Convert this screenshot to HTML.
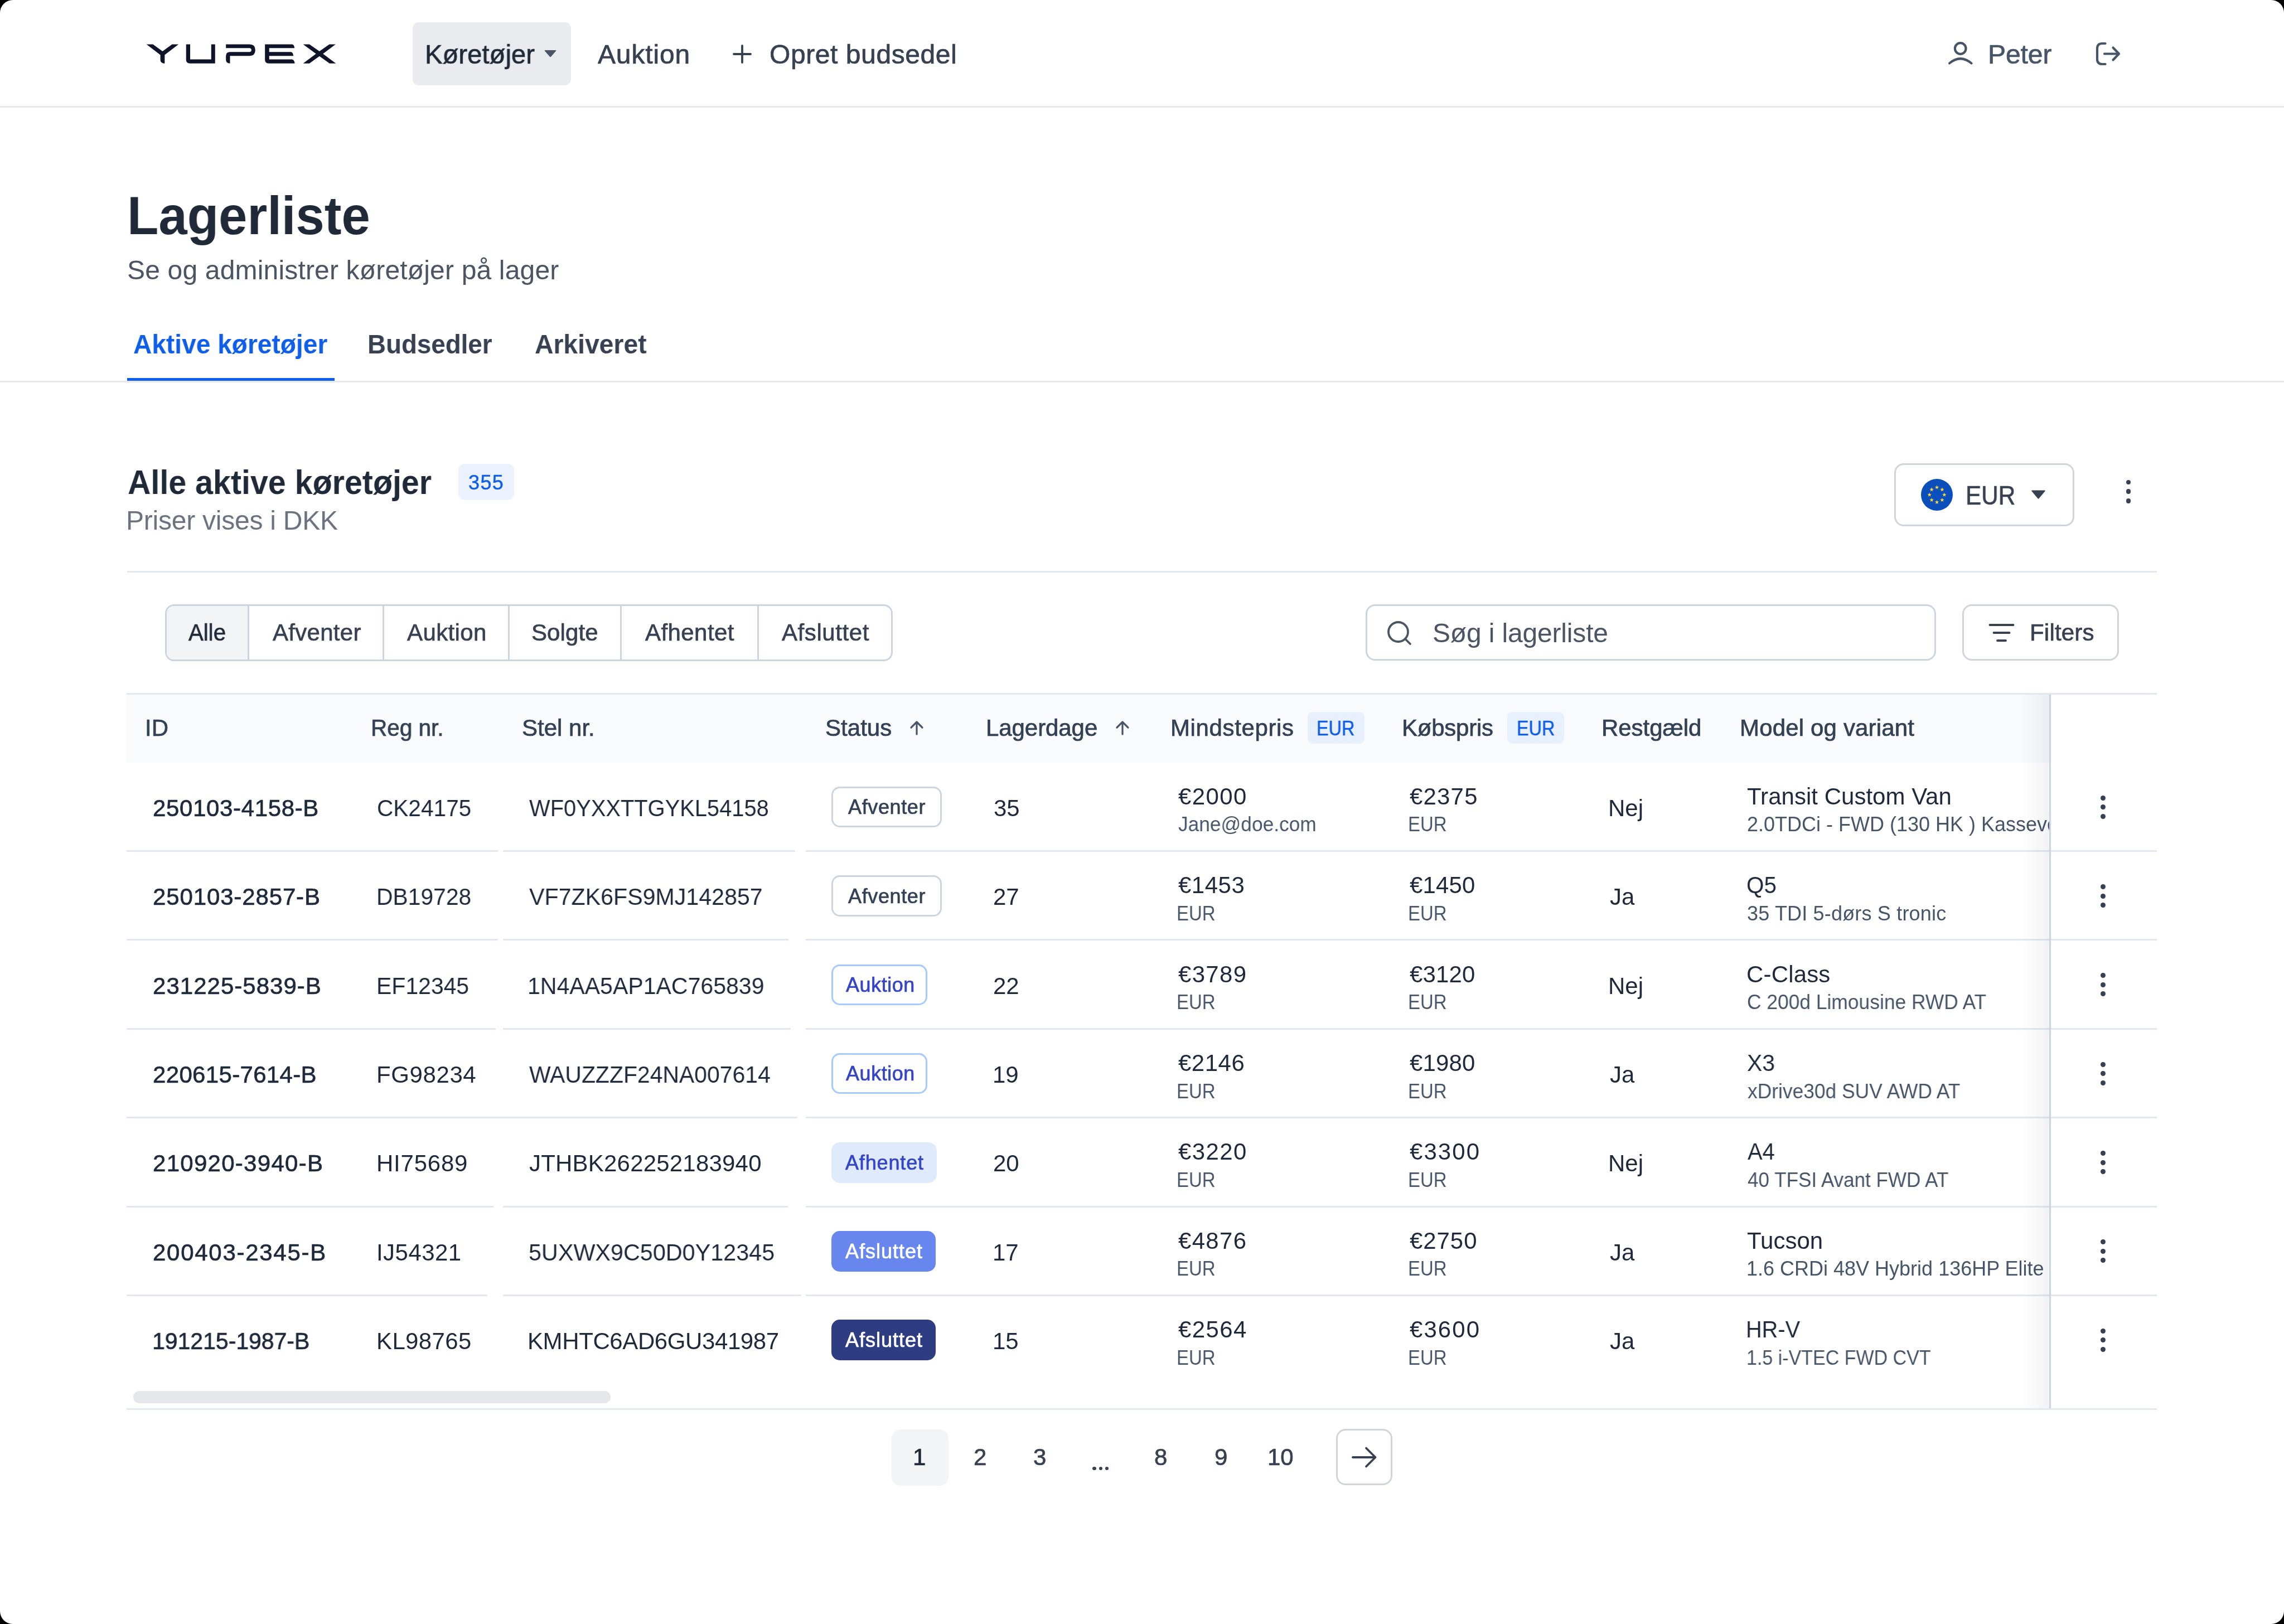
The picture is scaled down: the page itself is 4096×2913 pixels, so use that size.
<!DOCTYPE html>
<html><head><meta charset="utf-8"><style>
html,body{margin:0;padding:0;background:#000;width:4096px;height:2913px;overflow:hidden;}
#pg{position:absolute;left:0;top:0;width:4096px;height:2913px;background:#fff;border-radius:23px;overflow:hidden;font-family:'Liberation Sans', sans-serif;}
.t{position:absolute;white-space:nowrap;line-height:0;will-change:transform;}
.r{position:absolute;}
.s{position:absolute;overflow:visible;}
</style></head><body><div id="pg">
<svg class="s" style="left:250px;top:60px;width:370px;height:70px;" viewBox="0 0 2284 432"><g fill="#10142a"><path d="M78,120 H150 L256,197 L362,120 H433 L280,238 V332 H270 Q232,326 232,292 V238 Z"/><path d="M517,120 H562 V287 H795 V120 H838 V332 H560 Q517,332 517,292 Z"/><path d="M958,120 H1220 Q1283,120 1283,184 Q1283,248 1220,248 H1003 V332 Q958,330 958,292 V250 Q958,205 1003,205 H1218 Q1240,205 1240,184 Q1240,162 1218,162 H958 Z"/><path d="M1390,120 H1690 Q1713,122 1718,162 H1437 V205 H1678 Q1700,207 1705,248 H1437 V287 H1690 Q1714,290 1720,332 H1432 Q1390,332 1390,292 Z"/><path d="M1812,120 H1882 L1993,198 L2103,120 H2172 L2032,225 L2175,332 H2105 L1993,252 L1882,332 H1812 L1955,225 Z"/></g></svg>
<div class="r" style="left:740.0px;top:40.0px;width:284.0px;height:113.0px;background:#e9ebee;border-radius:11px;"></div>
<div class="t" style="left:762.05px;top:98px;font-size:48px;color:#1f2937;-webkit-text-stroke:0.7px #1f2937;transform:scaleX(0.9848);transform-origin:0 0;">Køretøjer</div>
<svg class="s" style="left:976px;top:89px;width:22px;height:14px;" viewBox="0 0 22 14"><path d="M1.5,1 H20.5 Q22,1 21,2.5 L12.2,12.6 Q11,14 9.8,12.6 L1,2.5 Q0,1 1.5,1 Z" fill="#4b5563"/></svg>
<div class="t" style="left:1072.00px;top:98px;font-size:48px;color:#374151;-webkit-text-stroke:0.7px #374151;letter-spacing:0.833px;">Auktion</div>
<svg class="s" style="left:1310px;top:76px;width:42px;height:42px;" viewBox="0 0 42 42"><path d="M21,6 V36 M6,21 H36" stroke="#374151" stroke-width="3.8" stroke-linecap="round" fill="none"/></svg>
<div class="t" style="left:1380.00px;top:98px;font-size:48px;color:#374151;-webkit-text-stroke:0.7px #374151;letter-spacing:0.577px;">Opret budsedel</div>
<svg class="s" style="left:3490px;top:72px;width:52px;height:48px;" viewBox="0 0 52 48"><g stroke="#475569" stroke-width="4.2" fill="none" stroke-linecap="round"><circle cx="25.7" cy="15" r="9.8"/><path d="M6,41.5 Q25.7,25 45.5,41.5"/></g></svg>
<div class="t" style="left:3565.00px;top:98px;font-size:48px;color:#475569;-webkit-text-stroke:0.7px #475569;letter-spacing:-0.075px;">Peter</div>
<svg class="s" style="left:3752px;top:70px;width:56px;height:52px;" viewBox="0 0 56 52"><g stroke="#475569" stroke-width="4.2" fill="none" stroke-linecap="round" stroke-linejoin="round"><path d="M23.5,8 H18 Q9,8 9,17 V36 Q9,45 18,45 H23.5"/><path d="M22,26.5 H47 M37.5,15.5 L48,26.5 L37.5,37.5"/></g></svg>
<div class="r" style="left:0.0px;top:190.0px;width:4096.0px;height:3.0px;background:#e5e7eb;"></div>
<div class="t" style="left:227.79px;top:387px;font-size:97px;color:#1f2937;font-weight:700;transform:scaleX(0.9510);transform-origin:0 0;">Lagerliste</div>
<div class="t" style="left:228.00px;top:485px;font-size:48px;color:#4b5563;letter-spacing:0.171px;">Se og administrer køretøjer på lager</div>
<div class="t" style="left:239.04px;top:618px;font-size:48px;color:#0f5ee9;font-weight:700;transform:scaleX(0.9599);transform-origin:0 0;">Aktive køretøjer</div>
<div class="t" style="left:659.14px;top:618px;font-size:48px;color:#374151;font-weight:700;transform:scaleX(0.9524);transform-origin:0 0;">Budsedler</div>
<div class="t" style="left:958.64px;top:618px;font-size:48px;color:#374151;font-weight:700;transform:scaleX(0.9633);transform-origin:0 0;">Arkiveret</div>
<div class="r" style="left:0.0px;top:683.0px;width:4096.0px;height:3.0px;background:#e5e7eb;"></div>
<div class="r" style="left:228.0px;top:678.0px;width:372.0px;height:5.0px;background:#0f5ee9;"></div>
<div class="t" style="left:228.66px;top:865px;font-size:61px;color:#1f2937;font-weight:700;transform:scaleX(0.9401);transform-origin:0 0;">Alle aktive køretøjer</div>
<div class="r" style="left:822.0px;top:832.0px;width:99.5px;height:65.0px;background:#ebf2fe;border-radius:12px;"></div>
<div class="t" style="left:840.00px;top:866px;font-size:36px;color:#0f5ee9;-webkit-text-stroke:0.5px #0f5ee9;letter-spacing:1.400px;">355</div>
<div class="t" style="left:226.00px;top:934px;font-size:48px;color:#6b7280;letter-spacing:-0.235px;">Priser vises i DKK</div>
<div class="r" style="left:3397.0px;top:831.0px;width:323.0px;height:113.0px;background:#fff;border:3px solid #d1d5db;box-sizing:border-box;border-radius:17px;"></div>
<svg class="s" style="left:3444.5px;top:859px;width:57px;height:57px;" viewBox="0 0 57 57"><circle cx="28.5" cy="28.5" r="28.5" fill="#0b4fbd"/><polygon points="41.80,24.60 42.74,27.21 45.51,27.29 43.32,28.99 44.09,31.66 41.80,30.10 39.51,31.66 40.28,28.99 38.09,27.29 40.86,27.21" fill="#ffd935"/><polygon points="37.90,34.00 38.84,36.61 41.61,36.70 39.43,38.40 40.20,41.06 37.90,39.50 35.61,41.06 36.38,38.40 34.20,36.70 36.96,36.61" fill="#ffd935"/><polygon points="28.50,37.90 29.44,40.51 32.21,40.59 30.02,42.29 30.79,44.96 28.50,43.40 26.21,44.96 26.98,42.29 24.79,40.59 27.56,40.51" fill="#ffd935"/><polygon points="19.10,34.00 20.04,36.61 22.80,36.70 20.62,38.40 21.39,41.06 19.10,39.50 16.80,41.06 17.57,38.40 15.39,36.70 18.16,36.61" fill="#ffd935"/><polygon points="15.20,24.60 16.14,27.21 18.91,27.29 16.72,28.99 17.49,31.66 15.20,30.10 12.91,31.66 13.68,28.99 11.49,27.29 14.26,27.21" fill="#ffd935"/><polygon points="19.10,15.20 20.04,17.80 22.80,17.89 20.62,19.59 21.39,22.25 19.10,20.70 16.80,22.25 17.57,19.59 15.39,17.89 18.16,17.80" fill="#ffd935"/><polygon points="28.50,11.30 29.44,13.91 32.21,13.99 30.02,15.69 30.79,18.36 28.50,16.80 26.21,18.36 26.98,15.69 24.79,13.99 27.56,13.91" fill="#ffd935"/><polygon points="37.90,15.20 38.84,17.80 41.61,17.89 39.43,19.59 40.20,22.25 37.90,20.70 35.61,22.25 36.38,19.59 34.20,17.89 36.96,17.80" fill="#ffd935"/></svg>
<div class="t" style="left:3524.66px;top:889px;font-size:48px;color:#374151;-webkit-text-stroke:0.7px #374151;transform:scaleX(0.8804);transform-origin:0 0;">EUR</div>
<svg class="s" style="left:3642px;top:878px;width:27px;height:18px;" viewBox="0 0 27 18"><path d="M2,1.5 H25 Q26.5,1.5 25.5,3 L14.6,16 Q13.5,17.3 12.4,16 L1.5,3 Q0.5,1.5 2,1.5 Z" fill="#374151"/></svg>
<div class="r" style="left:3812.6px;top:860.6px;width:8.8px;height:8.8px;background:#374151;border-radius:5px;"></div>
<div class="r" style="left:3812.6px;top:877.4px;width:8.8px;height:8.8px;background:#374151;border-radius:5px;"></div>
<div class="r" style="left:3812.6px;top:894.2px;width:8.8px;height:8.8px;background:#374151;border-radius:5px;"></div>
<div class="r" style="left:228.0px;top:1024.0px;width:3640.0px;height:3.0px;background:#e2e8f0;"></div>
<div class="r" style="left:296.0px;top:1084.0px;width:1305.0px;height:102.0px;background:#fff;border:3px solid #cbd5e1;box-sizing:border-box;border-radius:16px;"></div>
<div class="r" style="left:299.0px;top:1087.0px;width:146.0px;height:96.0px;background:#f3f4f6;border-radius:13px 0 0 13px;"></div>
<div class="r" style="left:444.0px;top:1087.0px;width:3.0px;height:96.0px;background:#cbd5e1;"></div>
<div class="r" style="left:686.0px;top:1087.0px;width:3.0px;height:96.0px;background:#cbd5e1;"></div>
<div class="r" style="left:911.0px;top:1087.0px;width:3.0px;height:96.0px;background:#cbd5e1;"></div>
<div class="r" style="left:1112.0px;top:1087.0px;width:3.0px;height:96.0px;background:#cbd5e1;"></div>
<div class="r" style="left:1358.0px;top:1087.0px;width:3.0px;height:96.0px;background:#cbd5e1;"></div>
<div class="t" style="left:337.96px;top:1135px;font-size:42px;color:#1f2937;-webkit-text-stroke:0.7px #1f2937;transform:scaleX(0.9571);transform-origin:0 0;">Alle</div>
<div class="t" style="left:488.70px;top:1135px;font-size:42px;color:#374151;-webkit-text-stroke:0.7px #374151;letter-spacing:0.286px;">Afventer</div>
<div class="t" style="left:730.00px;top:1135px;font-size:42px;color:#374151;-webkit-text-stroke:0.7px #374151;letter-spacing:0.383px;">Auktion</div>
<div class="t" style="left:953.00px;top:1135px;font-size:42px;color:#374151;-webkit-text-stroke:0.7px #374151;letter-spacing:0.080px;">Solgte</div>
<div class="t" style="left:1157.00px;top:1135px;font-size:42px;color:#374151;-webkit-text-stroke:0.7px #374151;letter-spacing:0.429px;">Afhentet</div>
<div class="t" style="left:1401.80px;top:1135px;font-size:42px;color:#374151;-webkit-text-stroke:0.7px #374151;letter-spacing:0.588px;">Afsluttet</div>
<div class="r" style="left:2449.0px;top:1084.0px;width:1023.0px;height:101.0px;background:#fff;border:3px solid #cbd5e1;box-sizing:border-box;border-radius:17px;"></div>
<svg class="s" style="left:2484px;top:1110px;width:50px;height:50px;" viewBox="0 0 50 50"><g stroke="#4b5563" stroke-width="3.8" fill="none" stroke-linecap="round"><circle cx="23.5" cy="23.5" r="17.5"/><path d="M36.5,36.5 L45,45"/></g></svg>
<div class="t" style="left:2569.00px;top:1136px;font-size:48px;color:#4b5563;letter-spacing:-0.160px;">Søg i lagerliste</div>
<div class="r" style="left:3519.0px;top:1084.0px;width:281.0px;height:101.0px;background:#fff;border:3px solid #d1d5db;box-sizing:border-box;border-radius:17px;"></div>
<svg class="s" style="left:3560px;top:1110px;width:60px;height:50px;" viewBox="0 0 60 50"><g stroke="#374151" stroke-width="3.8" fill="none" stroke-linecap="round"><path d="M8.5,11 H50.5 M15.5,25 H43.5 M22,39 H37"/></g></svg>
<div class="t" style="left:3640.40px;top:1135px;font-size:42px;color:#374151;-webkit-text-stroke:0.7px #374151;letter-spacing:0.200px;">Filters</div>
<div class="r" style="left:227.0px;top:1243.0px;width:3641.0px;height:3.0px;background:#e2e8f0;"></div>
<div class="r" style="left:227.0px;top:1246.0px;width:3448.0px;height:122.0px;background:#f8fafc;"></div>
<div class="t" style="left:260.00px;top:1306px;font-size:42px;color:#334155;-webkit-text-stroke:0.7px #334155;">ID</div>
<div class="t" style="left:664.71px;top:1306px;font-size:42px;color:#334155;-webkit-text-stroke:0.7px #334155;transform:scaleX(0.9643);transform-origin:0 0;">Reg nr.</div>
<div class="t" style="left:936.30px;top:1306px;font-size:42px;color:#334155;-webkit-text-stroke:0.7px #334155;">Stel nr.</div>
<div class="t" style="left:1479.80px;top:1306px;font-size:42px;color:#334155;-webkit-text-stroke:0.7px #334155;letter-spacing:0.040px;">Status</div>
<div class="t" style="left:1768.00px;top:1306px;font-size:42px;color:#334155;-webkit-text-stroke:0.7px #334155;letter-spacing:-0.075px;">Lagerdage</div>
<div class="t" style="left:2098.70px;top:1306px;font-size:42px;color:#334155;-webkit-text-stroke:0.7px #334155;letter-spacing:0.630px;">Mindstepris</div>
<div class="t" style="left:2514.40px;top:1306px;font-size:42px;color:#334155;-webkit-text-stroke:0.7px #334155;letter-spacing:-0.243px;">Købspris</div>
<div class="t" style="left:2872.30px;top:1306px;font-size:42px;color:#334155;-webkit-text-stroke:0.7px #334155;letter-spacing:-0.043px;">Restgæld</div>
<div class="t" style="left:3119.60px;top:1306px;font-size:42px;color:#334155;-webkit-text-stroke:0.7px #334155;letter-spacing:0.160px;">Model og variant</div>
<svg class="s" style="left:1630.5px;top:1292px;width:26px;height:28px;" viewBox="0 0 26 28"><g stroke="#475569" stroke-width="3.2" fill="none" stroke-linecap="round" stroke-linejoin="round"><path d="M13,3 V25 M3,13 L13,3 L23,13"/></g></svg>
<svg class="s" style="left:1999.7px;top:1292px;width:26px;height:28px;" viewBox="0 0 26 28"><g stroke="#475569" stroke-width="3.2" fill="none" stroke-linecap="round" stroke-linejoin="round"><path d="M13,3 V25 M3,13 L13,3 L23,13"/></g></svg>
<div class="r" style="left:2344.8px;top:1277.4px;width:102.4px;height:56.4px;background:#e8effd;border-radius:10px;"></div>
<div class="t" style="left:2361.20px;top:1307px;font-size:36px;color:#0f5ee9;-webkit-text-stroke:0.5px #0f5ee9;transform:scaleX(0.9000);transform-origin:0 0;">EUR</div>
<div class="r" style="left:2703.3px;top:1277.4px;width:101.7px;height:56.4px;background:#e8effd;border-radius:10px;"></div>
<div class="t" style="left:2719.70px;top:1307px;font-size:36px;color:#0f5ee9;-webkit-text-stroke:0.5px #0f5ee9;transform:scaleX(0.9000);transform-origin:0 0;">EUR</div>
<div class="t" style="left:273.60px;top:1450px;font-size:42px;color:#1e293b;-webkit-text-stroke:0.7px #1e293b;letter-spacing:0.650px;">250103-4158-B</div>
<div class="t" style="left:676.07px;top:1450px;font-size:42px;color:#1e293b;transform:scaleX(0.9663);transform-origin:0 0;">CK24175</div>
<div class="t" style="left:949.00px;top:1450px;font-size:42px;color:#1e293b;transform:scaleX(0.9490);transform-origin:0 0;">WF0YXXTTGYKL54158</div>
<div class="r" style="left:1490.6px;top:1411.1px;width:198.2px;height:73.2px;background:#fff;border:3px solid #cbd5e1;box-sizing:border-box;border-radius:15px;"></div>
<div class="t" style="left:1521.00px;top:1448px;font-size:36px;color:#334155;-webkit-text-stroke:0.7px #334155;letter-spacing:0.629px;">Afventer</div>
<div class="t" style="left:1782.20px;top:1450px;font-size:42px;color:#1e293b;">35</div>
<div class="t" style="left:2113.00px;top:1429px;font-size:42px;color:#1e293b;letter-spacing:1.375px;">€2000</div>
<div class="t" style="left:2113.00px;top:1479px;font-size:36px;color:#475569;transform:scaleX(0.9801);transform-origin:0 0;">Jane@doe.com</div>
<div class="t" style="left:2527.80px;top:1429px;font-size:42px;color:#1e293b;letter-spacing:1.175px;">€2375</div>
<div class="t" style="left:2525.05px;top:1479px;font-size:36px;color:#475569;transform:scaleX(0.9155);transform-origin:0 0;">EUR</div>
<div class="t" style="left:2883.70px;top:1450px;font-size:42px;color:#1e293b;">Nej</div>
<div class="t" style="left:3133.30px;top:1429px;font-size:42px;color:#1e293b;letter-spacing:0.024px;">Transit Custom Van</div>
<div class="r" style="left:3134.3px;top:1431px;width:543.7px;height:90px;overflow:hidden;"><div class="t" style="left:-1.00px;top:48px;font-size:36px;color:#475569;">2.0TDCi - FWD (130 HK ) Kassevogn</div></div>
<div class="r" style="left:3767.2px;top:1426.7px;width:9.0px;height:9.0px;background:#374151;border-radius:5px;"></div>
<div class="r" style="left:3767.2px;top:1443.2px;width:9.0px;height:9.0px;background:#374151;border-radius:5px;"></div>
<div class="r" style="left:3767.2px;top:1459.7px;width:9.0px;height:9.0px;background:#374151;border-radius:5px;"></div>
<div class="t" style="left:273.60px;top:1609px;font-size:42px;color:#1e293b;-webkit-text-stroke:0.7px #1e293b;letter-spacing:0.867px;">250103-2857-B</div>
<div class="t" style="left:675.08px;top:1609px;font-size:42px;color:#1e293b;transform:scaleX(0.9719);transform-origin:0 0;">DB19728</div>
<div class="t" style="left:949.00px;top:1609px;font-size:42px;color:#1e293b;transform:scaleX(0.9800);transform-origin:0 0;">VF7ZK6FS9MJ142857</div>
<div class="r" style="left:1490.6px;top:1570.4px;width:198.2px;height:73.2px;background:#fff;border:3px solid #cbd5e1;box-sizing:border-box;border-radius:15px;"></div>
<div class="t" style="left:1521.00px;top:1608px;font-size:36px;color:#334155;-webkit-text-stroke:0.7px #334155;letter-spacing:0.629px;">Afventer</div>
<div class="t" style="left:1781.20px;top:1609px;font-size:42px;color:#1e293b;">27</div>
<div class="t" style="left:2113.00px;top:1588px;font-size:42px;color:#1e293b;letter-spacing:0.500px;">€1453</div>
<div class="t" style="left:2110.25px;top:1639px;font-size:36px;color:#475569;transform:scaleX(0.9155);transform-origin:0 0;">EUR</div>
<div class="t" style="left:2527.80px;top:1588px;font-size:42px;color:#1e293b;letter-spacing:0.125px;">€1450</div>
<div class="t" style="left:2525.05px;top:1639px;font-size:36px;color:#475569;transform:scaleX(0.9155);transform-origin:0 0;">EUR</div>
<div class="t" style="left:2886.70px;top:1609px;font-size:42px;color:#1e293b;">Ja</div>
<div class="t" style="left:3132.38px;top:1588px;font-size:42px;color:#1e293b;transform:scaleX(0.9623);transform-origin:0 0;">Q5</div>
<div class="t" style="left:3133.30px;top:1639px;font-size:36px;color:#475569;letter-spacing:0.176px;">35 TDI 5-dørs S tronic</div>
<div class="r" style="left:3767.2px;top:1586.0px;width:9.0px;height:9.0px;background:#374151;border-radius:5px;"></div>
<div class="r" style="left:3767.2px;top:1602.5px;width:9.0px;height:9.0px;background:#374151;border-radius:5px;"></div>
<div class="r" style="left:3767.2px;top:1619.0px;width:9.0px;height:9.0px;background:#374151;border-radius:5px;"></div>
<div class="t" style="left:273.60px;top:1769px;font-size:42px;color:#1e293b;-webkit-text-stroke:0.7px #1e293b;letter-spacing:1.025px;">231225-5839-B</div>
<div class="t" style="left:675.08px;top:1769px;font-size:42px;color:#1e293b;transform:scaleX(0.9747);transform-origin:0 0;">EF12345</div>
<div class="t" style="left:946.07px;top:1769px;font-size:42px;color:#1e293b;transform:scaleX(0.9774);transform-origin:0 0;">1N4AA5AP1AC765839</div>
<div class="r" style="left:1490.6px;top:1729.8px;width:172.9px;height:73.2px;background:#fff;border:3px solid #a4cafe;box-sizing:border-box;border-radius:15px;"></div>
<div class="t" style="left:1516.90px;top:1767px;font-size:36px;color:#3445c7;-webkit-text-stroke:0.7px #3445c7;letter-spacing:0.550px;">Auktion</div>
<div class="t" style="left:1781.20px;top:1769px;font-size:42px;color:#1e293b;">22</div>
<div class="t" style="left:2113.00px;top:1748px;font-size:42px;color:#1e293b;letter-spacing:1.300px;">€3789</div>
<div class="t" style="left:2110.25px;top:1798px;font-size:36px;color:#475569;transform:scaleX(0.9155);transform-origin:0 0;">EUR</div>
<div class="t" style="left:2527.80px;top:1748px;font-size:42px;color:#1e293b;letter-spacing:0.125px;">€3120</div>
<div class="t" style="left:2525.05px;top:1798px;font-size:36px;color:#475569;transform:scaleX(0.9155);transform-origin:0 0;">EUR</div>
<div class="t" style="left:2883.70px;top:1769px;font-size:42px;color:#1e293b;">Nej</div>
<div class="t" style="left:3132.30px;top:1748px;font-size:42px;color:#1e293b;letter-spacing:0.167px;">C-Class</div>
<div class="t" style="left:3133.32px;top:1798px;font-size:36px;color:#475569;transform:scaleX(0.9825);transform-origin:0 0;">C 200d Limousine RWD AT</div>
<div class="r" style="left:3767.2px;top:1745.4px;width:9.0px;height:9.0px;background:#374151;border-radius:5px;"></div>
<div class="r" style="left:3767.2px;top:1761.9px;width:9.0px;height:9.0px;background:#374151;border-radius:5px;"></div>
<div class="r" style="left:3767.2px;top:1778.4px;width:9.0px;height:9.0px;background:#374151;border-radius:5px;"></div>
<div class="t" style="left:273.60px;top:1928px;font-size:42px;color:#1e293b;-webkit-text-stroke:0.7px #1e293b;letter-spacing:0.333px;">220615-7614-B</div>
<div class="t" style="left:675.00px;top:1928px;font-size:42px;color:#1e293b;letter-spacing:0.600px;">FG98234</div>
<div class="t" style="left:949.00px;top:1928px;font-size:42px;color:#1e293b;transform:scaleX(0.9741);transform-origin:0 0;">WAUZZZF24NA007614</div>
<div class="r" style="left:1490.6px;top:1889.1px;width:172.9px;height:73.2px;background:#fff;border:3px solid #a4cafe;box-sizing:border-box;border-radius:15px;"></div>
<div class="t" style="left:1516.90px;top:1926px;font-size:36px;color:#3445c7;-webkit-text-stroke:0.7px #3445c7;letter-spacing:0.550px;">Auktion</div>
<div class="t" style="left:1780.20px;top:1928px;font-size:42px;color:#1e293b;">19</div>
<div class="t" style="left:2113.00px;top:1907px;font-size:42px;color:#1e293b;letter-spacing:0.500px;">€2146</div>
<div class="t" style="left:2110.25px;top:1958px;font-size:36px;color:#475569;transform:scaleX(0.9155);transform-origin:0 0;">EUR</div>
<div class="t" style="left:2527.80px;top:1907px;font-size:42px;color:#1e293b;letter-spacing:0.125px;">€1980</div>
<div class="t" style="left:2525.05px;top:1958px;font-size:36px;color:#475569;transform:scaleX(0.9155);transform-origin:0 0;">EUR</div>
<div class="t" style="left:2886.70px;top:1928px;font-size:42px;color:#1e293b;">Ja</div>
<div class="t" style="left:3133.33px;top:1907px;font-size:42px;color:#1e293b;transform:scaleX(0.9735);transform-origin:0 0;">X3</div>
<div class="t" style="left:3134.30px;top:1958px;font-size:36px;color:#475569;transform:scaleX(0.9827);transform-origin:0 0;">xDrive30d SUV AWD AT</div>
<div class="r" style="left:3767.2px;top:1904.7px;width:9.0px;height:9.0px;background:#374151;border-radius:5px;"></div>
<div class="r" style="left:3767.2px;top:1921.2px;width:9.0px;height:9.0px;background:#374151;border-radius:5px;"></div>
<div class="r" style="left:3767.2px;top:1937.7px;width:9.0px;height:9.0px;background:#374151;border-radius:5px;"></div>
<div class="t" style="left:273.60px;top:2087px;font-size:42px;color:#1e293b;-webkit-text-stroke:0.7px #1e293b;letter-spacing:1.283px;">210920-3940-B</div>
<div class="t" style="left:675.00px;top:2087px;font-size:42px;color:#1e293b;letter-spacing:0.767px;">HI75689</div>
<div class="t" style="left:949.00px;top:2087px;font-size:42px;color:#1e293b;letter-spacing:0.200px;">JTHBK262252183940</div>
<div class="r" style="left:1490.6px;top:2048.5px;width:189.4px;height:73.2px;background:#dfebfd;border-radius:15px;"></div>
<div class="t" style="left:1515.80px;top:2086px;font-size:36px;color:#3445c7;-webkit-text-stroke:0.7px #3445c7;letter-spacing:0.857px;">Afhentet</div>
<div class="t" style="left:1781.20px;top:2087px;font-size:42px;color:#1e293b;">20</div>
<div class="t" style="left:2113.00px;top:2066px;font-size:42px;color:#1e293b;letter-spacing:1.375px;">€3220</div>
<div class="t" style="left:2110.25px;top:2117px;font-size:36px;color:#475569;transform:scaleX(0.9155);transform-origin:0 0;">EUR</div>
<div class="t" style="left:2527.80px;top:2066px;font-size:42px;color:#1e293b;letter-spacing:2.050px;">€3300</div>
<div class="t" style="left:2525.05px;top:2117px;font-size:36px;color:#475569;transform:scaleX(0.9155);transform-origin:0 0;">EUR</div>
<div class="t" style="left:2883.70px;top:2087px;font-size:42px;color:#1e293b;">Nej</div>
<div class="t" style="left:3134.30px;top:2066px;font-size:42px;color:#1e293b;transform:scaleX(0.9490);transform-origin:0 0;">A4</div>
<div class="t" style="left:3134.30px;top:2117px;font-size:36px;color:#475569;transform:scaleX(0.9735);transform-origin:0 0;">40 TFSI Avant FWD AT</div>
<div class="r" style="left:3767.2px;top:2064.1px;width:9.0px;height:9.0px;background:#374151;border-radius:5px;"></div>
<div class="r" style="left:3767.2px;top:2080.6px;width:9.0px;height:9.0px;background:#374151;border-radius:5px;"></div>
<div class="r" style="left:3767.2px;top:2097.1px;width:9.0px;height:9.0px;background:#374151;border-radius:5px;"></div>
<div class="t" style="left:273.60px;top:2247px;font-size:42px;color:#1e293b;-webkit-text-stroke:0.7px #1e293b;letter-spacing:1.717px;">200403-2345-B</div>
<div class="t" style="left:675.00px;top:2247px;font-size:42px;color:#1e293b;letter-spacing:0.450px;">IJ54321</div>
<div class="t" style="left:948.02px;top:2247px;font-size:42px;color:#1e293b;transform:scaleX(0.9841);transform-origin:0 0;">5UXWX9C50D0Y12345</div>
<div class="r" style="left:1490.6px;top:2207.8px;width:187.7px;height:73.2px;background:#6787ee;border-radius:15px;"></div>
<div class="t" style="left:1515.95px;top:2245px;font-size:36px;color:#ffffff;-webkit-text-stroke:0.7px #ffffff;letter-spacing:1.000px;">Afsluttet</div>
<div class="t" style="left:1780.20px;top:2247px;font-size:42px;color:#1e293b;">17</div>
<div class="t" style="left:2113.00px;top:2226px;font-size:42px;color:#1e293b;letter-spacing:1.300px;">€4876</div>
<div class="t" style="left:2110.25px;top:2276px;font-size:36px;color:#475569;transform:scaleX(0.9155);transform-origin:0 0;">EUR</div>
<div class="t" style="left:2527.80px;top:2226px;font-size:42px;color:#1e293b;letter-spacing:0.925px;">€2750</div>
<div class="t" style="left:2525.05px;top:2276px;font-size:36px;color:#475569;transform:scaleX(0.9155);transform-origin:0 0;">EUR</div>
<div class="t" style="left:2886.70px;top:2247px;font-size:42px;color:#1e293b;">Ja</div>
<div class="t" style="left:3133.30px;top:2226px;font-size:42px;color:#1e293b;letter-spacing:-0.020px;">Tucson</div>
<div class="r" style="left:3134.3px;top:2228px;width:543.7px;height:90px;overflow:hidden;"><div class="t" style="left:-2.00px;top:48px;font-size:36px;color:#475569;">1.6 CRDi 48V Hybrid 136HP Elite Fremad</div></div>
<div class="r" style="left:3767.2px;top:2223.4px;width:9.0px;height:9.0px;background:#374151;border-radius:5px;"></div>
<div class="r" style="left:3767.2px;top:2239.9px;width:9.0px;height:9.0px;background:#374151;border-radius:5px;"></div>
<div class="r" style="left:3767.2px;top:2256.4px;width:9.0px;height:9.0px;background:#374151;border-radius:5px;"></div>
<div class="t" style="left:272.65px;top:2406px;font-size:42px;color:#1e293b;-webkit-text-stroke:0.7px #1e293b;transform:scaleX(0.9748);transform-origin:0 0;">191215-1987-B</div>
<div class="t" style="left:675.00px;top:2406px;font-size:42px;color:#1e293b;letter-spacing:0.367px;">KL98765</div>
<div class="t" style="left:946.00px;top:2406px;font-size:42px;color:#1e293b;letter-spacing:-0.400px;">KMHTC6AD6GU341987</div>
<div class="r" style="left:1490.6px;top:2367.2px;width:187.7px;height:73.2px;background:#2e3d82;border-radius:15px;"></div>
<div class="t" style="left:1515.95px;top:2404px;font-size:36px;color:#ffffff;-webkit-text-stroke:0.7px #ffffff;letter-spacing:1.000px;">Afsluttet</div>
<div class="t" style="left:1780.20px;top:2406px;font-size:42px;color:#1e293b;">15</div>
<div class="t" style="left:2113.00px;top:2385px;font-size:42px;color:#1e293b;letter-spacing:1.375px;">€2564</div>
<div class="t" style="left:2110.25px;top:2436px;font-size:36px;color:#475569;transform:scaleX(0.9155);transform-origin:0 0;">EUR</div>
<div class="t" style="left:2527.80px;top:2385px;font-size:42px;color:#1e293b;letter-spacing:2.050px;">€3600</div>
<div class="t" style="left:2525.05px;top:2436px;font-size:36px;color:#475569;transform:scaleX(0.9155);transform-origin:0 0;">EUR</div>
<div class="t" style="left:2886.70px;top:2406px;font-size:42px;color:#1e293b;">Ja</div>
<div class="t" style="left:3131.47px;top:2385px;font-size:42px;color:#1e293b;transform:scaleX(0.9450);transform-origin:0 0;">HR-V</div>
<div class="t" style="left:3132.41px;top:2436px;font-size:36px;color:#475569;transform:scaleX(0.9445);transform-origin:0 0;">1.5 i-VTEC FWD CVT</div>
<div class="r" style="left:3767.2px;top:2382.8px;width:9.0px;height:9.0px;background:#374151;border-radius:5px;"></div>
<div class="r" style="left:3767.2px;top:2399.3px;width:9.0px;height:9.0px;background:#374151;border-radius:5px;"></div>
<div class="r" style="left:3767.2px;top:2415.8px;width:9.0px;height:9.0px;background:#374151;border-radius:5px;"></div>
<div class="r" style="left:227.0px;top:1525.0px;width:665.9px;height:3.0px;background:#e2e8f0;"></div>
<div class="r" style="left:902.0px;top:1525.0px;width:523.7px;height:3.0px;background:#e2e8f0;"></div>
<div class="r" style="left:1445.0px;top:1525.0px;width:2423.0px;height:3.0px;background:#e2e8f0;"></div>
<div class="r" style="left:227.0px;top:1684.0px;width:665.9px;height:3.0px;background:#e2e8f0;"></div>
<div class="r" style="left:902.0px;top:1684.0px;width:512.2px;height:3.0px;background:#e2e8f0;"></div>
<div class="r" style="left:1445.0px;top:1684.0px;width:2423.0px;height:3.0px;background:#e2e8f0;"></div>
<div class="r" style="left:227.0px;top:1843.5px;width:661.5px;height:3.0px;background:#e2e8f0;"></div>
<div class="r" style="left:902.0px;top:1843.5px;width:516.0px;height:3.0px;background:#e2e8f0;"></div>
<div class="r" style="left:1445.0px;top:1843.5px;width:2423.0px;height:3.0px;background:#e2e8f0;"></div>
<div class="r" style="left:227.0px;top:2003.0px;width:1203.2px;height:3.0px;background:#e2e8f0;"></div>
<div class="r" style="left:1445.0px;top:2003.0px;width:2423.0px;height:3.0px;background:#e2e8f0;"></div>
<div class="r" style="left:227.0px;top:2162.5px;width:658.3px;height:3.0px;background:#e2e8f0;"></div>
<div class="r" style="left:902.0px;top:2162.5px;width:510.9px;height:3.0px;background:#e2e8f0;"></div>
<div class="r" style="left:1445.0px;top:2162.5px;width:2423.0px;height:3.0px;background:#e2e8f0;"></div>
<div class="r" style="left:227.0px;top:2322.0px;width:647.4px;height:3.0px;background:#e2e8f0;"></div>
<div class="r" style="left:902.0px;top:2322.0px;width:534.6px;height:3.0px;background:#e2e8f0;"></div>
<div class="r" style="left:1445.0px;top:2322.0px;width:2423.0px;height:3.0px;background:#e2e8f0;"></div>
<div class="r" style="left:3625.0px;top:1246.0px;width:50.0px;height:1280.0px;background:linear-gradient(to right, rgba(15,23,42,0), rgba(15,23,42,0.055));"></div>
<div class="r" style="left:3675.0px;top:1246.0px;width:3.0px;height:1280.0px;background:#cbd5e1;"></div>
<div class="r" style="left:238.5px;top:2495.0px;width:856.0px;height:22.0px;background:#e5e7eb;border-radius:11px;"></div>
<div class="r" style="left:227.0px;top:2526.0px;width:3641.0px;height:3.0px;background:#e2e8f0;"></div>
<div class="r" style="left:1598.5px;top:2563.5px;width:102.1px;height:101.2px;background:#f3f4f6;border-radius:16px;"></div>
<div class="t" style="left:1637.00px;top:2614px;font-size:42px;color:#1f2937;-webkit-text-stroke:0.7px #1f2937;">1</div>
<div class="t" style="left:1745.50px;top:2614px;font-size:42px;color:#374151;-webkit-text-stroke:0.7px #374151;">2</div>
<div class="t" style="left:1853.10px;top:2614px;font-size:42px;color:#374151;-webkit-text-stroke:0.7px #374151;">3</div>
<div class="t" style="left:2070.10px;top:2614px;font-size:42px;color:#374151;-webkit-text-stroke:0.7px #374151;">8</div>
<div class="t" style="left:2178.20px;top:2614px;font-size:42px;color:#374151;-webkit-text-stroke:0.7px #374151;">9</div>
<div class="t" style="left:2272.70px;top:2614px;font-size:42px;color:#374151;-webkit-text-stroke:0.7px #374151;">10</div>
<div class="r" style="left:1959.2px;top:2630.5px;width:6.6px;height:6.6px;background:#374151;border-radius:4px;"></div>
<div class="r" style="left:1970.5px;top:2630.5px;width:6.6px;height:6.6px;background:#374151;border-radius:4px;"></div>
<div class="r" style="left:1981.8px;top:2630.5px;width:6.6px;height:6.6px;background:#374151;border-radius:4px;"></div>
<div class="r" style="left:2396.0px;top:2563.0px;width:101.0px;height:101.0px;background:#fff;border:3px solid #d1d5db;box-sizing:border-box;border-radius:17px;"></div>
<svg class="s" style="left:2420px;top:2592px;width:52px;height:44px;" viewBox="0 0 52 44"><g stroke="#374151" stroke-width="3.8" fill="none" stroke-linecap="round" stroke-linejoin="round"><path d="M6,22 H46.5 M30,5.5 L46.5,22 L30,38.5"/></g></svg>
</div></body></html>
